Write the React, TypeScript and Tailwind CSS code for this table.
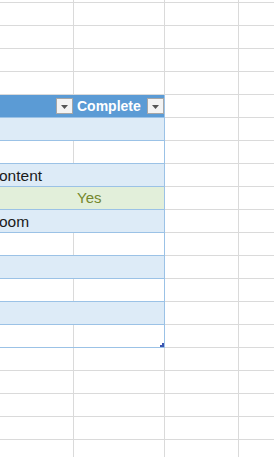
import React from 'react';

type Band = 'blue' | 'white' | 'green';

const rowBg: Record<Band, string> = {
  blue: 'bg-[#ddebf7]',
  white: 'bg-white',
  green: 'bg-[#e2efda]',
};

function FilterButton() {
  return (
    <div className="flex h-[16px] w-[17px] items-center justify-center border border-[#a6a6a6] bg-[#f3f3f3]">
      <svg width="7" height="4" viewBox="0 0 7 4" className="mt-[2px]">
        <path d="M0 0h7L3.5 4z" fill="#555" />
      </svg>
    </div>
  );
}

function PlainCells() {
  return (
    <>
      <div className="w-[74px] shrink-0 border-r border-[#dadada]" />
      <div className="flex-1" />
    </>
  );
}

function GridRow({ h = 'h-[23px]' }: { h?: string }) {
  return (
    <div className={`flex ${h} border-b border-[#dadada]`}>
      <div className="w-[74px] shrink-0 border-r border-[#dadada]" />
      <div className="w-[91px] shrink-0 border-r border-[#dadada]" />
      <PlainCells />
    </div>
  );
}

function TableRow({
  band,
  a,
  last,
}: {
  band: Band;
  a?: React.ReactNode;
  last?: boolean;
}) {
  const line = band === 'white' ? 'border-[#dadada]' : 'border-transparent';
  return (
    <div className="flex h-[23px]">
      <div className={`flex w-[165px] shrink-0 border-b border-r border-[#9bc2e6] ${rowBg[band]}`}>
        <div className={`relative flex w-[74px] shrink-0 items-end border-r pb-[1px] ${line}`}>
          {a}
        </div>
        <div className="relative flex flex-1 items-end pb-[1px]">
          {last && (
            <div className="absolute bottom-0 right-0 h-[4px] w-[4px]">
              <div className="absolute bottom-0 right-0 h-[2px] w-[4px] bg-[#3b55b0]" />
              <div className="absolute bottom-0 right-0 h-[4px] w-[2px] bg-[#3b55b0]" />
            </div>
          )}
        </div>
      </div>
      <div className="flex flex-1 border-b border-[#dadada]">
        <PlainCells />
      </div>
    </div>
  );
}

export default function App() {
  const body = "font-['Liberation_Sans',Arial,sans-serif] text-[15.5px] leading-[18px] text-[#1a1a1a] whitespace-nowrap";
  return (
    <div className="h-[457px] w-[274px] overflow-hidden bg-white font-['Liberation_Sans',Arial,sans-serif]">
      <GridRow h="h-[3px]" />
      <GridRow />
      <GridRow />
      <GridRow />
      <GridRow />

      {/* header */}
      <div className="flex h-[23px]">
        <div className="flex w-[165px] shrink-0 border-b border-r border-[#9bc2e6] bg-[#5b9bd5]">
          <div className="flex w-[74px] shrink-0 items-center justify-end pr-[1px]">
            <FilterButton />
          </div>
          <div className="flex flex-1 items-center justify-between pl-[3px]">
            <span className="text-[14px] font-bold leading-none text-white">Complete</span>
            <FilterButton />
          </div>
        </div>
        <div className="flex flex-1 border-b border-[#dadada]">
          <PlainCells />
        </div>
      </div>

      <TableRow band="blue" />
      <TableRow band="white" />
      <TableRow band="blue" a={<span className={`${body} -ml-[1px]`}>ontent</span>} />
      <TableRow
        band="green"
        a={
          <span className={`${body} absolute bottom-[2px] left-[77px] text-[15px] text-[#74872c]`}>Yes</span>
        }
      />
      <TableRow band="blue" a={<span className={`${body} -ml-[1px]`}>oom</span>} />
      <TableRow band="white" />
      <TableRow band="blue" />
      <TableRow band="white" />
      <TableRow band="blue" />
      <TableRow band="white" last />

      <GridRow />
      <GridRow />
      <GridRow />
      <GridRow />
      <GridRow />
    </div>
  );
}
